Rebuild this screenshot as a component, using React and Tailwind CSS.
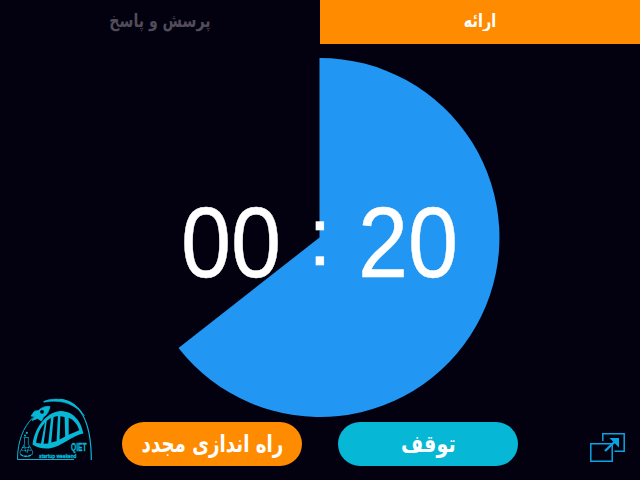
function Tab({ active, children }) {
  return (
    <button
      className={
        active
          ? "flex h-11 w-1/2 items-center justify-center bg-[#ff8c00] pb-0.5 text-white"
          : "flex h-11 w-1/2 items-center justify-center pb-0.5 text-[#514c5a]"
      }
    >
      {children}
    </button>
  );
}

function Logo() {
  return (
    <svg className="h-[66px] w-[78px]" viewBox="16 397 78 66" fill="none" stroke="#06b8d6">
      <path d="M60 399.3 C78 401 91.3 418 91.3 460" strokeWidth="1.2" />
      <path d="M43.5 401.5 C56 396.5 74 398.5 84.5 416 C74 402.5 59 399.5 44 402.3Z" fill="#06b8d6" strokeWidth=".5" />
      <path d="M33 417.5 C23 427 17.5 442 17.5 459.5 H74" strokeWidth="1" />
      <path d="M31 416 L34.5 411.2 38.5 410.5 C42 407 46 406 50 406.5 C49 411 47 415 43.5 417 L41.5 421 37.5 418.5 32 420.5 34.5 416.5Z" fill="#06b8d6" strokeWidth=".8" />
      <circle cx="42" cy="411.8" r="1.9" fill="#03000f" stroke="none" />
      <path
        fill="#06b8d6"
        stroke="none"
        fillRule="evenodd"
        d="M32.5 444.5 C35 425 49 411 61 411 C74 411.5 81.5 422 83.3 433.5 C71 436 61 447 49 448.5 C42 449 37 447.5 32.5 444.5Z M36.2 443 L41 443.5 45 422.5 C40 428 37 435 36.2 443Z M43.6 443.7 L48.2 443.5 51 418 46.8 420.8Z M51.3 442.5 L56.6 441 57.9 416 53.6 417Z M59.6 439.5 L65.2 436.6 64.6 417 60.4 416.2Z M68.7 434.7 L79.3 430.3 C77.5 424.5 74 420 68.7 417.8Z"
      />
      <path d="M23.5 437.5 H29 M24.5 438 V444 L20 452 Q20 456.5 26.3 456.5 Q32.5 456.5 32.8 452 L28.3 444 V438" strokeWidth=".7" />
      <path d="M22 447.5 H30.5 M21.5 450.3 H31.5 M24 445 L26 452 M29 446 L27 453" strokeWidth=".8" strokeDasharray="2 .6" />
      <path d="M20.5 454.5 Q26 458 32.3 454.5" strokeWidth="1.4" strokeDasharray="3 1" />
      <circle cx="26.8" cy="432.8" r="1.1" fill="#06b8d6" stroke="none" />
      <circle cx="25" cy="435.5" r="1" fill="#06b8d6" stroke="none" />
      <text x="71" y="451" textLength="15.5" lengthAdjust="spacingAndGlyphs" fill="#06b8d6" strokeWidth=".3" className="font-['Liberation_Sans'] text-[10px] font-bold">QIET</text>
      <text x="39" y="457.5" textLength="37.5" lengthAdjust="spacingAndGlyphs" fill="#06b8d6" strokeWidth=".3" className="font-['Liberation_Sans'] text-[5.5px] font-bold">startup weekend</text>
    </svg>
  );
}

function ExpandIcon() {
  return (
    <svg className="h-[30px] w-9" viewBox="590 433 36 30" fill="none" stroke="#08a5e4" strokeWidth="1.5">
      <path d="M602.8 441 V433.8 H624.2 V451.2 H614.5" />
      <path d="M590.8 443.8 H612.2 V461.2 H590.8Z" />
      <path d="M605 451 L615 441.5" strokeWidth="2.4" />
      <path d="M609.5 438 H619 V447.5Z" fill="#08a5e4" stroke="none" />
    </svg>
  );
}

export default function App() {
  return (
    <div className="flex h-[480px] w-[640px] flex-col overflow-hidden bg-[#03000f] font-['DejaVu_Sans','Noto_Sans',sans-serif] font-bold text-white">
      <header dir="rtl" className="flex h-11">
        <Tab active>
          <span className="inline-block scale-x-[.85] scale-y-110 whitespace-nowrap text-[17px]">ارائه</span>
        </Tab>
        <Tab>
          <span className="inline-block scale-x-[.83] scale-y-110 whitespace-nowrap text-[17px]">پرسش و پاسخ</span>
        </Tab>
      </header>
      <main className="grid h-[378px] place-items-start justify-center pt-[13px]">
        <svg className="col-start-1 row-start-1 h-[361px] w-[361px]" viewBox="140 57 361 361">
          <path d="M319.5 237.5 V58 A179.5 179.5 0 1 1 178.5 348Z" fill="#2196f3" />
        </svg>
        <div className="col-start-1 row-start-1 flex w-[361px] justify-center pt-[145px] font-['Liberation_Sans',sans-serif] text-[100px] font-normal leading-[80px] [-webkit-text-stroke:0.5px_white]">
          <span className="w-[101px] origin-left scale-x-[.9]">00</span>
          <span className="w-[76px] pt-px text-center text-[82px] leading-[68px]">:</span>
          <span className="w-[101px] origin-left scale-x-[.9]">20</span>
        </div>
      </main>
      <footer className="flex h-[58px] items-start">
        <div className="-mt-[25px] ml-4 w-[106px]">
          <Logo />
        </div>
        <button className="flex h-11 w-[180px] items-center justify-center rounded-full bg-[#ff8c00] pb-0.5">
          <span dir="rtl" className="inline-block scale-x-[.83] scale-y-110 whitespace-nowrap text-[22px]">راه اندازی مجدد</span>
        </button>
        <button className="ml-9 flex h-11 w-[180px] items-center justify-center rounded-full bg-[#06b8d6] pb-0.5">
          <span dir="rtl" className="inline-block scale-x-[.87] scale-y-110 whitespace-nowrap text-[22px]">توقف</span>
        </button>
        <button className="ml-[72px] mt-[11px]">
          <ExpandIcon />
        </button>
      </footer>
    </div>
  );
}
